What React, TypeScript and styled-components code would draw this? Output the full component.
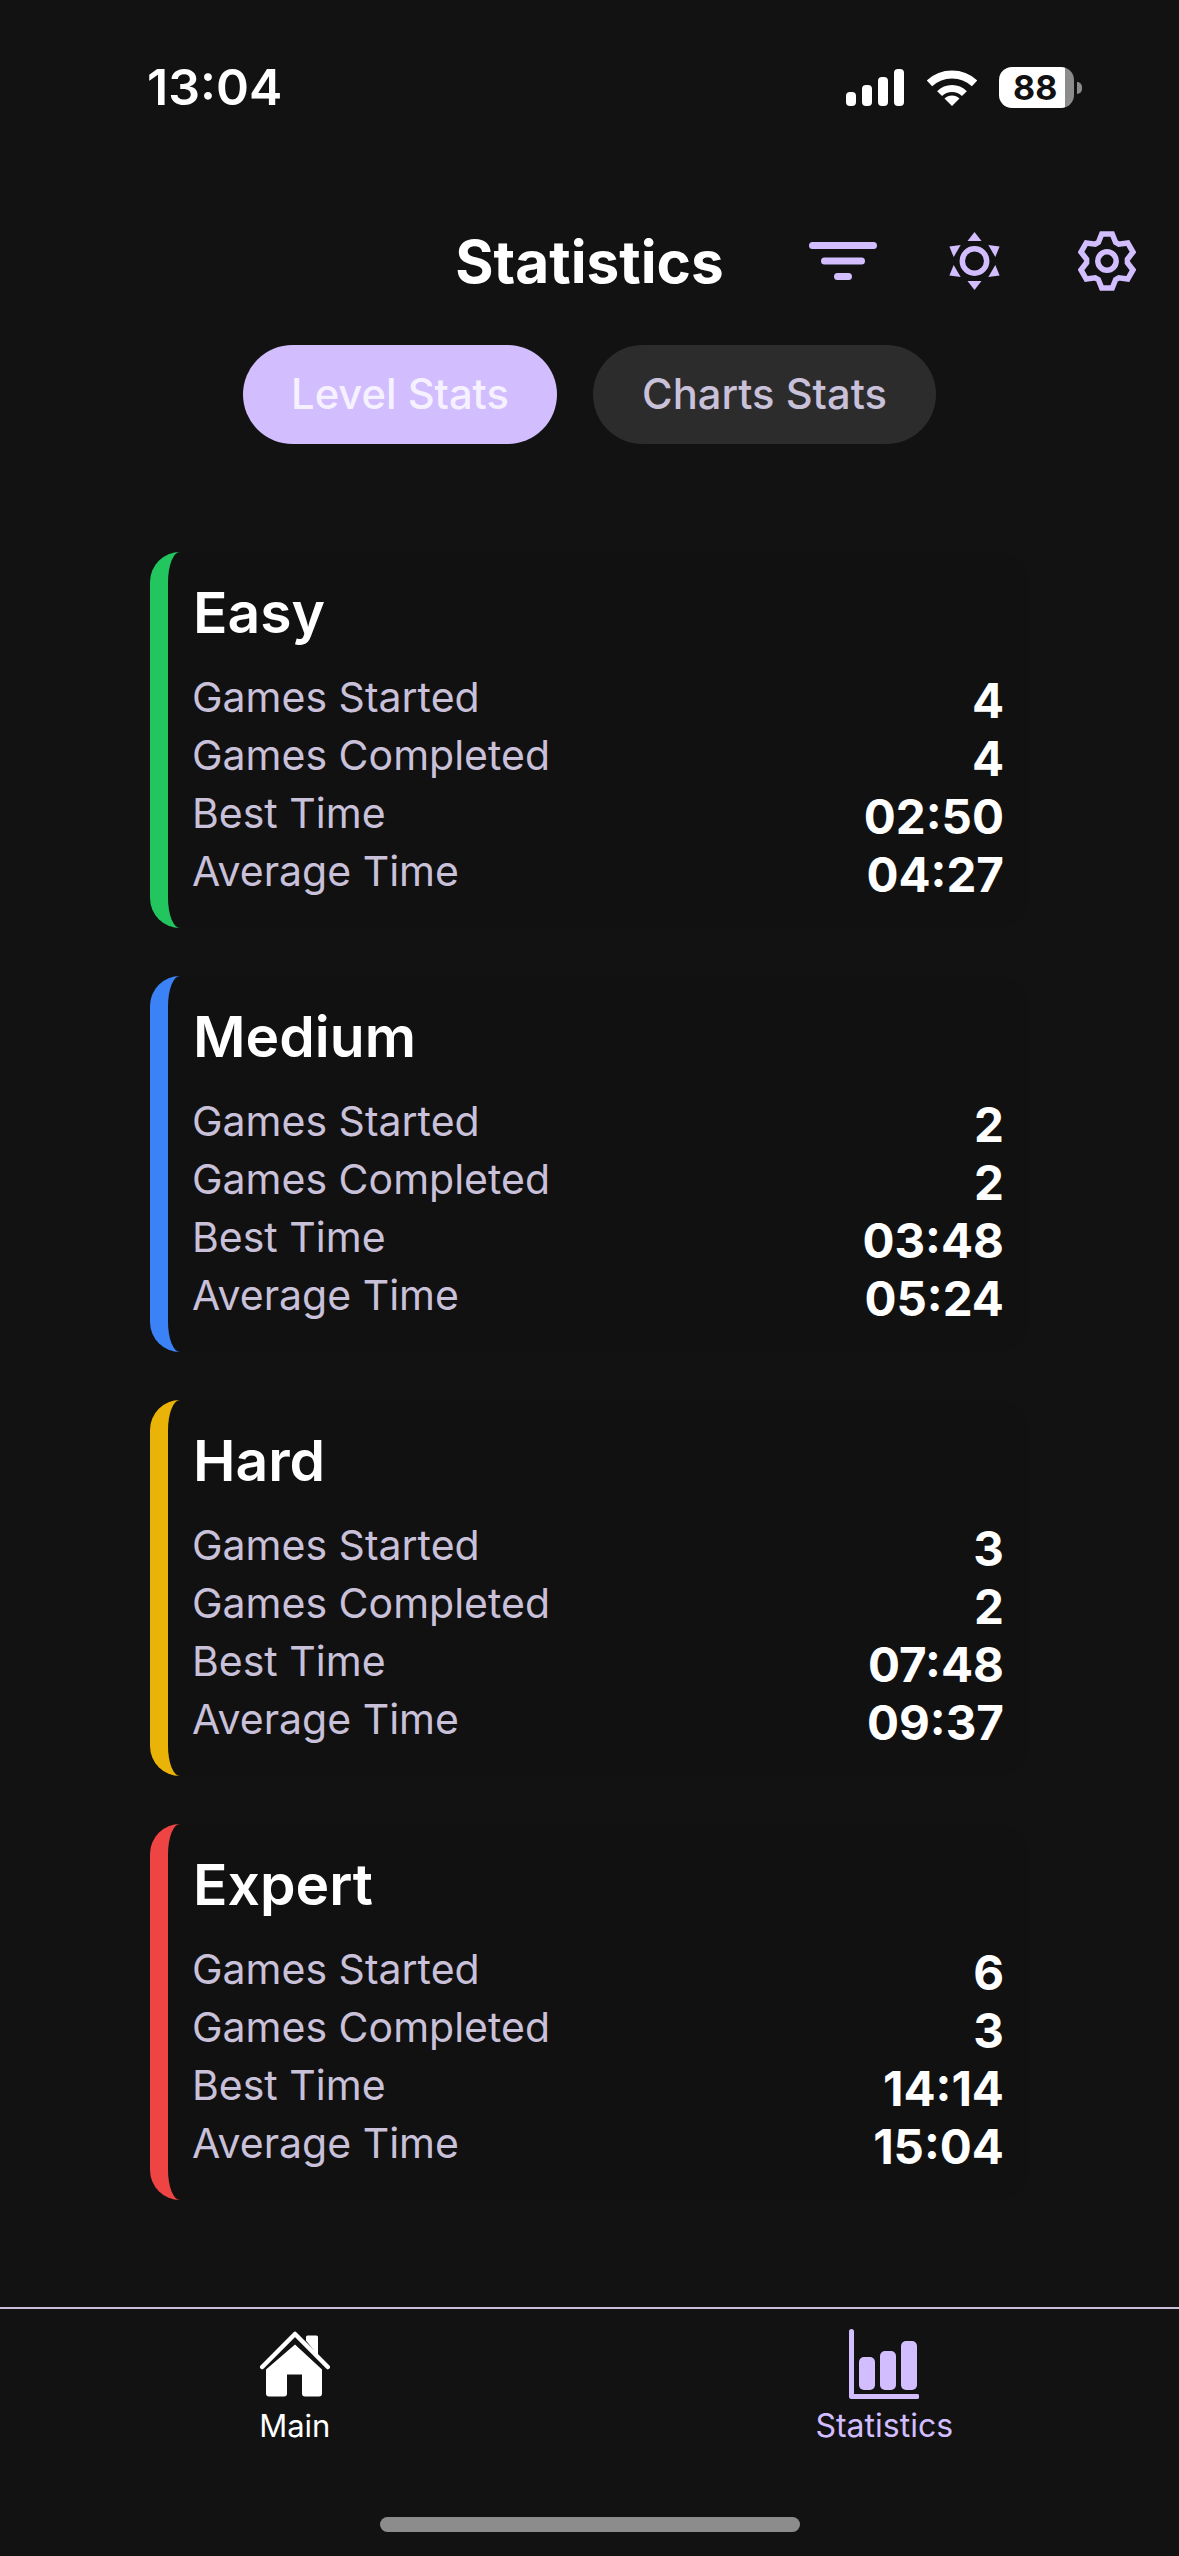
import React from "react";
import styled, { createGlobalStyle } from "styled-components";

const Global = createGlobalStyle`
  html, body { margin: 0; padding: 0; background: #121212; }
  * { box-sizing: border-box; }
`;

const Screen = styled.div`
  width: 1179px;
  height: 2556px;
  display: flex;
  flex-direction: column;
  background: #121212;
  font-family: Inter, "Liberation Sans", sans-serif;
  color: #fff;
  overflow: hidden;
`;

const StatusBar = styled.div`
  height: 108px;
  padding: 67px 105px 0 147px;
  display: flex;
  justify-content: space-between;
  align-items: flex-start;
`;

const Clock = styled.span`
  font-size: 50px;
  font-weight: 600;
  line-height: 41px;
`;

const StatusIcons = styled.div`
  display: flex;
  align-items: flex-end;
  height: 41px;
`;

const Signal = styled.svg`
  width: 58px;
  height: 37px;
  margin-bottom: 2px;
`;

const Wifi = styled.svg`
  width: 50px;
  height: 37px;
  margin: 0 22px 2px 23px;
`;

const Battery = styled.div`
  width: 75px;
  height: 41px;
  border-radius: 13px;
  background: linear-gradient(to right, #fff 66px, #8c8c8c 66px);
  color: #111;
  font-size: 34px;
  font-weight: 700;
  line-height: 41px;
  padding-left: 14px;
  position: relative;
  &::after {
    content: "";
    position: absolute;
    left: 78px;
    top: 15px;
    width: 5px;
    height: 12px;
    border-radius: 0 6px 6px 0;
    background: #8c8c8c;
  }
`;

const Header = styled.header`
  margin-top: 119px;
  height: 70px;
  display: grid;
  grid-template-columns: 1fr auto 1fr;
  align-items: center;
`;

const Title = styled.h1`
  grid-column: 2;
  margin: 0;
  font-size: 58.5px;
  font-weight: 700;
  line-height: 70px;
`;

const HeaderActions = styled.div`
  grid-column: 3;
  display: flex;
  align-items: center;
  justify-content: flex-end;
  padding-right: 43px;
  margin-top: -2px;
`;

const FilterIcon = styled.svg`
  width: 68px;
  height: 38px;
  margin-right: 71px;
`;

const SunIcon = styled.svg`
  width: 53px;
  height: 60px;
  margin-right: 77px;
`;

const GearIcon = styled.svg`
  width: 58px;
  height: 60px;
`;

const Tabs = styled.nav`
  margin-top: 48px;
  display: flex;
  justify-content: center;
  gap: 36px;
`;

const Tab = styled.div<{ $active?: boolean }>`
  height: 99px;
  width: ${(p) => (p.$active ? 314 : 343)}px;
  border-radius: 49.5px;
  display: flex;
  align-items: center;
  justify-content: center;
  padding-bottom: 2px;
  font-size: 41.7px;
  font-weight: 500;
  background: ${(p) => (p.$active ? "#d2bdff" : "#2c2c2c")};
  color: ${(p) => (p.$active ? "#f6f1ff" : "#c9c0d9")};
`;

const CardList = styled.main`
  margin-top: 108px;
  padding: 0 150px;
  display: flex;
  flex-direction: column;
  gap: 48px;
`;

const Card = styled.section<{ $accent: string }>`
  height: 376px;
  border-left: 18px solid ${(p) => p.$accent};
  border-radius: 30px;
  background: #111111;
  padding: 27px 25px 0 24px;
`;

const CardTitle = styled.h2`
  margin: 0 0 0 1px;
  font-size: 57px;
  font-weight: 600;
  line-height: 68px;
`;

const StatGrid = styled.div`
  margin-top: 21px;
  display: flex;
  justify-content: space-between;
`;

const Labels = styled.div`
  display: flex;
  flex-direction: column;
`;

const Label = styled.span`
  font-size: 41px;
  font-weight: 400;
  line-height: 58px;
  color: #c9c0d9;
`;

const Values = styled.div`
  padding-top: 4px;
  display: flex;
  flex-direction: column;
  align-items: flex-end;
`;

const Value = styled.span`
  font-size: 47.5px;
  font-weight: 700;
  line-height: 58px;
`;

const BottomNav = styled.footer`
  margin-top: auto;
  height: 249px;
  border-top: 2px solid #c9c0d9;
  display: grid;
  grid-template-columns: 1fr 1fr;
  align-items: start;
  position: relative;
`;

const NavItem = styled.div<{ $active?: boolean }>`
  display: flex;
  flex-direction: column;
  align-items: center;
  padding-top: 20px;
  color: ${(p) => (p.$active ? "#d2bdff" : "#fff")};
`;

const NavIcon = styled.svg`
  width: 70px;
  height: 72px;
  flex-shrink: 0;
  fill: currentColor;
`;

const NavLabel = styled.span<{ $active?: boolean }>`
  margin-top: 7px;
  font-size: ${(p) => (p.$active ? 32 : 31)}px;
  line-height: 36px;
  font-weight: 400;
`;

const HomeBar = styled.div`
  position: absolute;
  left: 380px;
  bottom: 24px;
  width: 420px;
  height: 15px;
  border-radius: 8px;
  background: #8c8c8c;
`;

const gearPath = (() => {
  const pts: string[] = [];
  const pol = (r: number, a: number) => {
    const t = ((a - 90) * Math.PI) / 180;
    return `${(29 + r * Math.cos(t)).toFixed(2)} ${(30 + r * Math.sin(t)).toFixed(2)}`;
  };
  for (let i = 0; i < 6; i++) {
    const c = i * 60;
    pts.push(pol(20.5, c - 25), pol(27.5, c - 11), pol(27.5, c + 11), pol(20.5, c + 25));
  }
  return "M" + pts.join("L") + "Z";
})();

const sunRays = [0, 60, 120, 180, 240, 300];

const levels = [
  { name: "Easy", accent: "#22c55e", v: ["4", "4", "02:50", "04:27"] },
  { name: "Medium", accent: "#3b82f6", v: ["2", "2", "03:48", "05:24"] },
  { name: "Hard", accent: "#eab308", v: ["3", "2", "07:48", "09:37"] },
  { name: "Expert", accent: "#ef4444", v: ["6", "3", "14:14", "15:04"] },
];

const labels = ["Games Started", "Games Completed", "Best Time", "Average Time"];

export default function App() {
  return (
    <Screen>
      <Global />
      <StatusBar>
        <Clock>13:04</Clock>
        <StatusIcons>
          <Signal viewBox="0 0 58 37" fill="#fff">
            <rect x="0" y="23" width="10" height="14" rx="4" />
            <rect x="16" y="16" width="10" height="21" rx="4" />
            <rect x="32" y="8" width="10" height="29" rx="4" />
            <rect x="48" y="0" width="10" height="37" rx="4" />
          </Signal>
          <Wifi viewBox="0 0 50 37" fill="none" stroke="#fff">
            <path d="M2.4 14.4A33 33 0 0 1 47.6 14.4" strokeWidth="8" />
            <path d="M12.6 24.6A17.5 17.5 0 0 1 37.4 24.6" strokeWidth="7" />
            <path d="M17.5 29.5A10.6 10.6 0 0 1 32.5 29.5L25 37Z" fill="#fff" stroke="none" />
          </Wifi>
          <Battery>88</Battery>
        </StatusIcons>
      </StatusBar>

      <Header>
        <Title>Statistics</Title>
        <HeaderActions>
          <FilterIcon viewBox="0 0 68 38" stroke="#d2bdff" strokeWidth="7" strokeLinecap="round">
            <path d="M3.5 3.5H64.5M15.5 19H52.5M28.5 34.5H39.5" />
          </FilterIcon>
          <SunIcon viewBox="0 0 53 60">
            <circle cx="26.5" cy="30" r="12.2" fill="none" stroke="#d2bdff" strokeWidth="5.5" />
            {sunRays.map((a) => (
              <path key={a} d="M26.5 1L33.5 10H19.5Z" fill="#d2bdff" transform={`rotate(${a} 26.5 30)`} />
            ))}
          </SunIcon>
          <GearIcon viewBox="0 0 58 60" fill="none" stroke="#d2bdff" strokeWidth="5.5">
            <path d={gearPath} strokeLinejoin="miter" />
            <circle cx="29" cy="30" r="9.2" />
          </GearIcon>
        </HeaderActions>
      </Header>

      <Tabs>
        <Tab $active>Level Stats</Tab>
        <Tab>Charts Stats</Tab>
      </Tabs>

      <CardList>
        {levels.map((l) => (
          <Card key={l.name} $accent={l.accent}>
            <CardTitle>{l.name}</CardTitle>
            <StatGrid>
              <Labels>
                {labels.map((t) => (
                  <Label key={t}>{t}</Label>
                ))}
              </Labels>
              <Values>
                {l.v.map((v, i) => (
                  <Value key={i}>{v}</Value>
                ))}
              </Values>
            </StatGrid>
          </Card>
        ))}
      </CardList>

      <BottomNav>
        <NavItem>
          <NavIcon viewBox="0 0 70 72">
            <g transform="translate(0 2.5)">
              <path d="M46 5.5a1.5 1.500 0 0 1 1.500-1.500h9a1.500 1.500 0 0 1 1.500 1.500V24L46 9Z" />
              <path d="M2.2 35.5L35 2.500L67.800 35.500" fill="none" stroke="currentColor" strokeWidth="4.500" strokeLinecap="round" strokeLinejoin="round" />
              <path d="M35 13L62 38V62a3 3 0 0 1-3 3H45a3 3 0 0 1-3-3V43H27V62a3 3 0 0 1-3 3H9a3 3 0 0 1-3-3V38Z" />
            </g>
          </NavIcon>
          <NavLabel>Main</NavLabel>
        </NavItem>
        <NavItem $active>
          <NavIcon viewBox="0 0 70 72">
            <path d="M2.5 2.500V67.500H68" fill="none" stroke="currentColor" strokeWidth="5" strokeLinecap="round" strokeLinejoin="round" />
            <rect x="10" y="28" width="16" height="33" rx="5" />
            <rect x="31" y="22" width="16" height="39" rx="5" />
            <rect x="52" y="12" width="16" height="49" rx="5" />
          </NavIcon>
          <NavLabel $active>Statistics</NavLabel>
        </NavItem>
        <HomeBar />
      </BottomNav>
    </Screen>
  );
}
